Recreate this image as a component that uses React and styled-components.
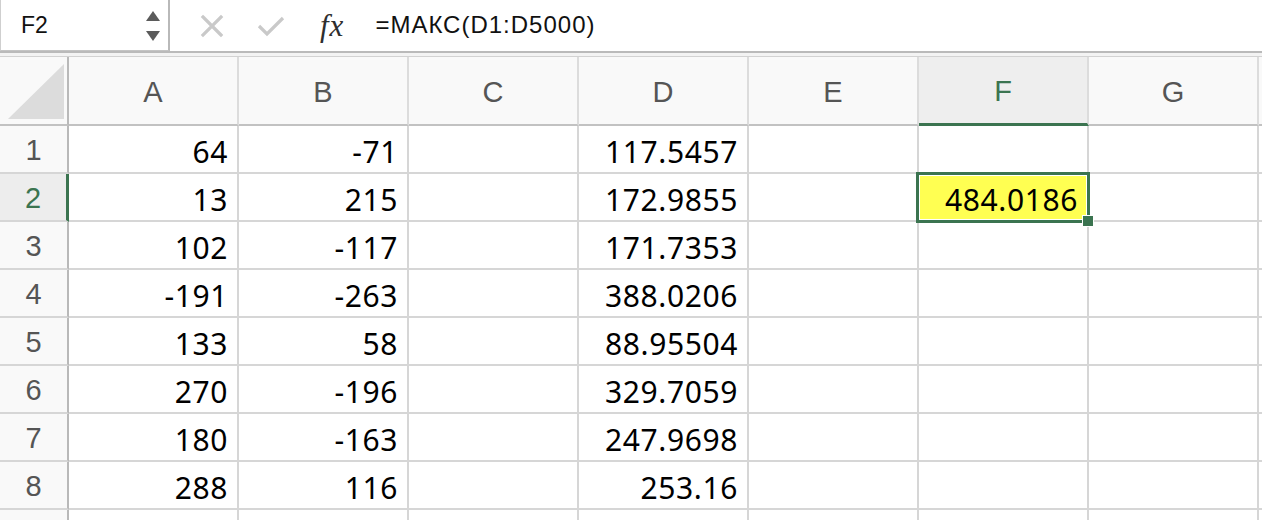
import React from 'react';
import styled, { createGlobalStyle, css } from 'styled-components';

const GlobalStyle = createGlobalStyle`
  html, body {
    margin: 0;
    padding: 0;
    background: #fff;
    overflow: hidden;
  }
  body {
    font-family: 'Liberation Sans', Arial, sans-serif;
  }
`;

const Page = styled.div`
  width: 1262px;
  height: 520px;
  overflow: hidden;
  background: #fff;
`;

const FormulaBar = styled.div`
  height: 51px;
  display: flex;
  align-items: stretch;
  background: #fff;
`;

const NameBox = styled.div`
  width: 170px;
  box-sizing: border-box;
  border-left: 1px solid #cfcfcf;
  border-right: 2px solid #b9b9b9;
  border-bottom: 1px solid #c4c4c4;
  display: flex;
  align-items: center;
  justify-content: space-between;
  padding: 0 8px 0 20px;
  font-size: 23px;
  color: #111;
`;

const Spinner = styled.div`
  display: flex;
  flex-direction: column;
  gap: 10px;
  padding-top: 2px;
`;

const IconSlot = styled.div`
  width: ${p => p.$w}px;
  display: flex;
  align-items: center;
  justify-content: center;
`;

const Tools = styled.div`
  display: flex;
  align-items: center;
  padding-left: 29px;
  gap: 32px;
`;

const FxLabel = styled.span`
  font-family: 'Liberation Serif', 'Times New Roman', serif;
  font-style: italic;
  font-size: 31px;
  color: #2e2e2e;
  letter-spacing: 1px;
  margin-left: 3px;
`;

const Separator = styled.div`
  width: 2px;
  height: 28px;
  background: #e2e2e2;
  margin-left: 14px;
`;

const FormulaText = styled.div`
  flex: 1;
  display: flex;
  align-items: center;
  padding-left: 17px;
  font-size: 24px;
  letter-spacing: 1px;
  color: #111;
  padding-bottom: 2px;
`;

const Divider = styled.div`
  height: 6px;
  box-sizing: border-box;
  border-top: 2px solid #bababa;
  border-bottom: 1px solid #d2d2d2;
  background: #f3f3f3;
`;

const Sheet = styled.div`
  display: grid;
  grid-template-columns: 69px repeat(7, 170px) 1fr;
  grid-auto-rows: 48px;
  grid-template-rows: 69px;
`;

const headerBase = css`
  box-sizing: border-box;
  display: flex;
  align-items: center;
  justify-content: center;
  font-family: 'Liberation Sans', Arial, sans-serif;
  font-size: 29px;
  padding-top: 3px;
`;

const Corner = styled.div`
  ${headerBase};
  background: #f9f9f9;
  border-right: 2px solid #b9b9b9;
  border-bottom: 2px solid #c2c2c2;
  align-items: flex-end;
  justify-content: flex-end;
  padding: 0 3px 4px 0;
`;

const ColHeader = styled.div`
  ${headerBase};
  background: ${p => (p.$active ? '#eeeeee' : '#f9f9f9')};
  color: ${p => (p.$active ? '#3b7450' : '#555')};
  border-right: 2px solid #dcdcdc;
  border-bottom: ${p => (p.$active ? '3px solid #3b7450' : '2px solid #c2c2c2')};
`;

const RowHeader = styled.div`
  ${headerBase};
  background: ${p => (p.$active ? '#ededed' : '#f9f9f9')};
  color: ${p => (p.$active ? '#3b7450' : '#555')};
  border-right: ${p => (p.$active ? '3px solid #3b7450' : '2px solid #b9b9b9')};
  border-bottom: 2px solid #d6d6d6;
`;

const Cell = styled.div`
  position: relative;
  box-sizing: border-box;
  border-right: 2px solid #d6d6d6;
  border-bottom: 2px solid #d6d6d6;
  display: flex;
  align-items: center;
  justify-content: flex-end;
  padding: 4px 9px 0 0;
  font-family: 'Noto Sans', 'Open Sans', sans-serif;
  font-size: 30px;
  letter-spacing: 0.6px;
  color: #000;
  white-space: nowrap;
  background: ${p => (p.$selected ? '#ffff52' : '#fff')};

  ${p =>
    p.$selected &&
    css`
      z-index: 2;
      &::before {
        content: '';
        position: absolute;
        top: -2px;
        left: -3px;
        right: -3px;
        bottom: -3px;
        border: 3px solid #3b7450;
        box-shadow: inset 0 0 0 1px #fff;
        pointer-events: none;
      }
      &::after {
        content: '';
        position: absolute;
        right: -7px;
        bottom: -7px;
        width: 10px;
        height: 10px;
        background: #3b7450;
        border: 1px solid #fff;
      }
    `}
`;

const columns = ['A', 'B', 'C', 'D', 'E', 'F', 'G'];

const data = [
  ['64', '-71', '', '117.5457', '', '', ''],
  ['13', '215', '', '172.9855', '', '484.0186', ''],
  ['102', '-117', '', '171.7353', '', '', ''],
  ['-191', '-263', '', '388.0206', '', '', ''],
  ['133', '58', '', '88.95504', '', '', ''],
  ['270', '-196', '', '329.7059', '', '', ''],
  ['180', '-163', '', '247.9698', '', '', ''],
  ['288', '116', '', '253.16', '', '', ''],
];

const ActiveCol = 'F';
const ActiveRow = 2;

const Triangle = () => (
  <svg width="56" height="56" viewBox="0 0 56 56">
    <polygon points="56,0 56,55 0,55" fill="#dcdcdc" />
  </svg>
);

const UpArrow = () => (
  <svg width="14" height="10" viewBox="0 0 14 10">
    <polygon points="7,0 14,10 0,10" fill="#5b5b5b" />
  </svg>
);

const DownArrow = () => (
  <svg width="14" height="10" viewBox="0 0 14 10">
    <polygon points="0,0 14,0 7,10" fill="#5b5b5b" />
  </svg>
);

const CrossIcon = () => (
  <svg width="24" height="24" viewBox="0 0 24 24">
    <path d="M3 3 L21 21 M21 3 L3 21" stroke="#c9c9c9" strokeWidth="3.2" strokeLinecap="square" />
  </svg>
);

const CheckIcon = () => (
  <svg width="28" height="22" viewBox="0 0 28 22">
    <path d="M2 11 L10 19 L26 3" stroke="#c9c9c9" strokeWidth="3.2" fill="none" />
  </svg>
);

const App = () => (
  <Page>
    <GlobalStyle />
    <FormulaBar>
      <NameBox>
        <span>F2</span>
        <Spinner>
          <UpArrow />
          <DownArrow />
        </Spinner>
      </NameBox>
      <Tools>
        <IconSlot $w={26}><CrossIcon /></IconSlot>
        <IconSlot $w={28}><CheckIcon /></IconSlot>
        <FxLabel>fx</FxLabel>
      </Tools>
      <IconSlot $w={14}><Separator /></IconSlot>
      <FormulaText>=МАКС(D1:D5000)</FormulaText>
    </FormulaBar>
    <Divider />
    <Sheet>
      <Corner><Triangle /></Corner>
      {columns.map(c => (
        <ColHeader key={c} $active={c === ActiveCol}>{c}</ColHeader>
      ))}
      <ColHeader />
      {data.map((row, i) => (
        <React.Fragment key={i}>
          <RowHeader $active={i + 1 === ActiveRow}>{i + 1}</RowHeader>
          {row.map((v, j) => (
            <Cell key={j} $selected={i + 1 === ActiveRow && columns[j] === ActiveCol}>{v}</Cell>
          ))}
          <Cell />
        </React.Fragment>
      ))}
      {/* row 9 is only partly in view, its label falls below the edge */}
      <RowHeader />
      {columns.map(c => (
        <Cell key={c} />
      ))}
      <Cell />
    </Sheet>
  </Page>
);

export default App;
